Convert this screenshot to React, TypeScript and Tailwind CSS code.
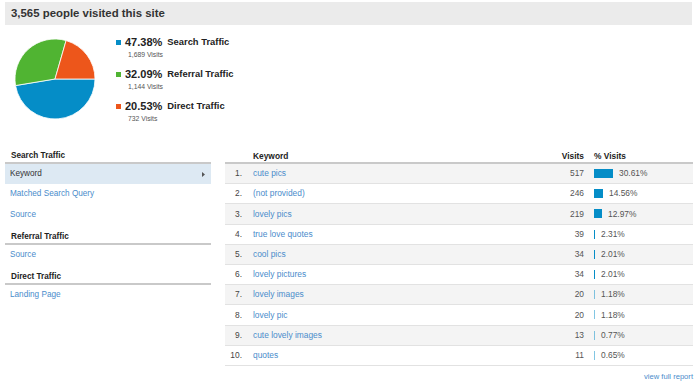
import React from "react";

const rows: [string, number, string, number][] = [
  ["cute pics", 517, "30.61%", 19],
  ["(not provided)", 246, "14.56%", 9],
  ["lovely pics", 219, "12.97%", 8],
  ["true love quotes", 39, "2.31%", 1],
  ["cool pics", 34, "2.01%", 1],
  ["lovely pictures", 34, "2.01%", 1],
  ["lovely images", 20, "1.18%", 1],
  ["lovely pic", 20, "1.18%", 1],
  ["cute lovely images", 13, "0.77%", 1],
  ["quotes", 11, "0.65%", 1],
];

const legend = [
  { color: "bg-[#058dc7]", pct: "47.38%", label: "Search Traffic", visits: "1,689 Visits" },
  { color: "bg-[#50b432]", pct: "32.09%", label: "Referral Traffic", visits: "1,144 Visits" },
  { color: "bg-[#ed561b]", pct: "20.53%", label: "Direct Traffic", visits: "732 Visits" },
];

function Pie() {
  return (
    <svg width="82" height="82" viewBox="0 0 82 82" className="mt-[13px] ml-[9px] shrink-0">
      <path d="M41 41 L81 41 A40 40 0 0 1 1.54 47.55 Z" fill="#058dc7" stroke="#fff" strokeWidth="0.8" />
      <path d="M41 41 L1.54 47.55 A40 40 0 0 1 52.09 2.57 Z" fill="#50b432" stroke="#fff" strokeWidth="0.8" />
      <path d="M41 41 L52.09 2.57 A40 40 0 0 1 81 41 Z" fill="#ed561b" stroke="#fff" strokeWidth="0.8" />
    </svg>
  );
}

function NavHeading({ children }: { children: React.ReactNode }) {
  return (
    <div className="h-[20.2px] flex items-end pb-[1px] pl-[6px] border-b-2 border-[#c9c9c9] text-[8.2px] leading-[10px] font-bold text-[#222]">
      {children}
    </div>
  );
}

function NavItem({ children, active }: { children: React.ReactNode; active?: boolean }) {
  return (
    <div
      className={
        active
          ? "h-[20.2px] flex items-center justify-between pl-[5px] pr-[6px] bg-[#dde9f3] text-[8.2px] text-[#333]"
          : "h-[20.2px] flex items-center pl-[5px] text-[8.2px] text-[#4a8ccb]"
      }
    >
      <span>{children}</span>
      {active && (
        <svg width="3" height="5" viewBox="0 0 3 5">
          <polygon points="0,0 3,2.5 0,5" fill="#555" />
        </svg>
      )}
    </div>
  );
}

export default function App() {
  return (
    <div className="w-[700px] h-[390px] bg-white px-[5px] pt-[2px] font-['Liberation_Sans',Arial,sans-serif] overflow-hidden">
      <div className="h-[23px] w-[687px] bg-[#ebebeb] flex items-center pl-[6px] text-[11.4px] font-bold text-[#333]">
        3,565 people visited this site
      </div>

      <div className="h-[119px] flex">
        <Pie />
        <div className="ml-[20px] mt-[11px] flex flex-col">
          {legend.map((l) => (
            <div key={l.pct} className="h-[32px]">
              <div className="h-[13px] flex items-center">
                <span className={`w-[5px] h-[5px] ${l.color} mr-[4px]`} />
                <span className="text-[11px] font-bold text-[#222]">{l.pct}</span>
                <span className="ml-[5px] text-[9.4px] font-bold text-[#222]">{l.label}</span>
              </div>
              <div className="h-[12px] flex items-center pl-[12px] text-[6.8px] text-[#555]">{l.visits}</div>
            </div>
          ))}
        </div>
      </div>

      <div className="flex">
        <div className="w-[206px] shrink-0">
          <NavHeading>Search Traffic</NavHeading>
          <NavItem active>Keyword</NavItem>
          <NavItem>Matched Search Query</NavItem>
          <NavItem>Source</NavItem>
          <NavHeading>Referral Traffic</NavHeading>
          <NavItem>Source</NavItem>
          <NavHeading>Direct Traffic</NavHeading>
          <NavItem>Landing Page</NavItem>
        </div>

        <div className="ml-[14px] w-[468px]">
          <div className="h-5 flex items-end pb-[1px] border-b-2 border-[#c9c9c9] text-[8.4px] leading-[10px] font-bold text-[#222]">
            <span className="w-[17px]" />
            <span className="flex-1 pl-[11px]">Keyword</span>
            <span className="w-[50px] text-right">Visits</span>
            <span className="w-[109px] pl-[10px]">% Visits</span>
          </div>
          {rows.map(([kw, v, pct, w], i) => (
            <div
              key={i}
              className={`h-[20.2px] flex items-center border-b border-[#e2e2e2] text-[8.4px] ${i % 2 === 0 ? "bg-[#f4f4f4]" : "bg-white"}`}
            >
              <span className="w-[17px] text-right text-[#444]">{i + 1}.</span>
              <span className="flex-1 pl-[11px] text-[#4a8ccb]">{kw}</span>
              <span className="w-[50px] text-right text-[#555]">{v}</span>
              <span className="w-[109px] pl-[10px] flex items-center text-[#555]">
                <span
                  className={`h-[9px] bg-[#058dc7] ${parseFloat(pct) < 1.5 ? "opacity-50" : ""}`}
                  style={{ width: w }}
                />
                <span className="ml-[6px]">{pct}</span>
              </span>
            </div>
          ))}
          <div className="mt-[5px] text-right text-[7.6px] text-[#4a8ccb]">view full report</div>
        </div>
      </div>
    </div>
  );
}
